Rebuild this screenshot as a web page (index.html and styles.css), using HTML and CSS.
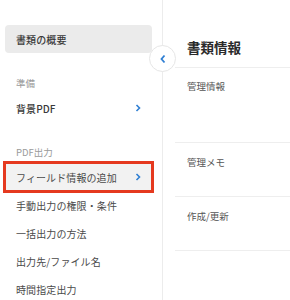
FILE: index.html
```html
<!DOCTYPE html>
<html lang="ja">
<head>
  <meta charset="UTF-8">
  <meta name="viewport" content="width=device-width, initial-scale=1.0">
  <title>書類情報</title>
  <link rel="stylesheet" href="styles.css">
</head>
<body>
  <div class="layout">
    <nav class="sidebar">
      <div class="nav-item current">書類の概要</div>

      <div class="section-label">準備</div>
      <div class="nav-item">
        <span>背景PDF</span>
        <svg class="chev" width="6" height="8" viewBox="0 0 6 8"><polyline points="1.5,1 4.5,4 1.5,7" fill="none" stroke="#2f7fd3" stroke-width="1.6"/></svg>
      </div>

      <div class="section-label">PDF出力</div>
      <div class="nav-item active">
        <span>フィールド情報の追加</span>
        <svg class="chev" width="6" height="8" viewBox="0 0 6 8"><polyline points="1.5,1 4.5,4 1.5,7" fill="none" stroke="#2f7fd3" stroke-width="1.6"/></svg>
      </div>
      <div class="nav-item sub">手動出力の権限・条件</div>
      <div class="nav-item sub">一括出力の方法</div>
      <div class="nav-item sub">出力先/ファイル名</div>
      <div class="nav-item sub">時間指定出力</div>

      <button class="collapse">
        <svg width="8" height="10" viewBox="0 0 8 10"><polyline points="5.5,1.5 2.5,5 5.5,8.5" fill="none" stroke="#2f7fd3" stroke-width="1.8"/></svg>
      </button>
    </nav>

    <main class="main">
      <h1 class="title">書類情報</h1>
      <div class="block tall">管理情報</div>
      <div class="block">管理メモ</div>
      <div class="block">作成/更新</div>
    </main>
  </div>
</body>
</html>
```

FILE: styles.css
```css
body {
  margin: 0;
  background: #fff;
  font-family: "Noto Sans CJK JP", "Noto Sans", sans-serif;
  color: #444;
}
.layout {
  display: flex;
  height: 300px;
  overflow: hidden;
}
.sidebar {
  position: relative;
  width: 163px;
  flex-shrink: 0;
  border-right: 1px solid #ececec;
  padding-top: 25px;
  box-sizing: border-box;
}
.nav-item {
  display: flex;
  align-items: center;
  justify-content: space-between;
  height: 28px;
  margin-left: 5px;
  width: 147px;
  padding: 0 11px;
  box-sizing: border-box;
  font-size: 10px;
  letter-spacing: 0.1px;
  color: #3a3a3a;
  font-weight: 500;
}
.nav-item.sub {
  font-weight: 400;
  color: #4a4a4a;
}
.nav-item.current {
  background: #ebebeb;
  border-radius: 4px;
}
.nav-item.active {
  background: #f2f2f2;
  font-weight: 400;
  color: #4a4a4a;
  outline: 3px solid #e5391f;
  outline-offset: -1px;
}
.section-label {
  margin: 22px 0 3px 16px;
  height: 16px;
  line-height: 16px;
  font-size: 9.5px;
  color: #9a9a9a;
}
.collapse {
  position: absolute;
  top: 45px;
  right: -14px;
  width: 27px;
  height: 27px;
  border-radius: 50%;
  border: 1px solid #e6e6e6;
  background: #fff;
  padding: 0;
  display: flex;
  align-items: center;
  justify-content: center;
}
.main {
  flex: 1;
  padding-left: 12px;
  padding-top: 36px;
}
.title {
  margin: 0;
  padding-left: 12px;
  height: 22px;
  line-height: 22px;
  font-size: 13.5px;
  font-weight: 700;
  color: #2a2a2a;
  border-bottom: 1px solid #eeeeee;
  padding-bottom: 9px;
}
.block {
  height: 54px;
  padding: 12px 0 0 12px;
  box-sizing: border-box;
  font-size: 9.5px;
  color: #555;
  border-bottom: 1px solid #eeeeee;
}
.block.tall {
  height: 75px;
  padding-top: 11px;
}
```
